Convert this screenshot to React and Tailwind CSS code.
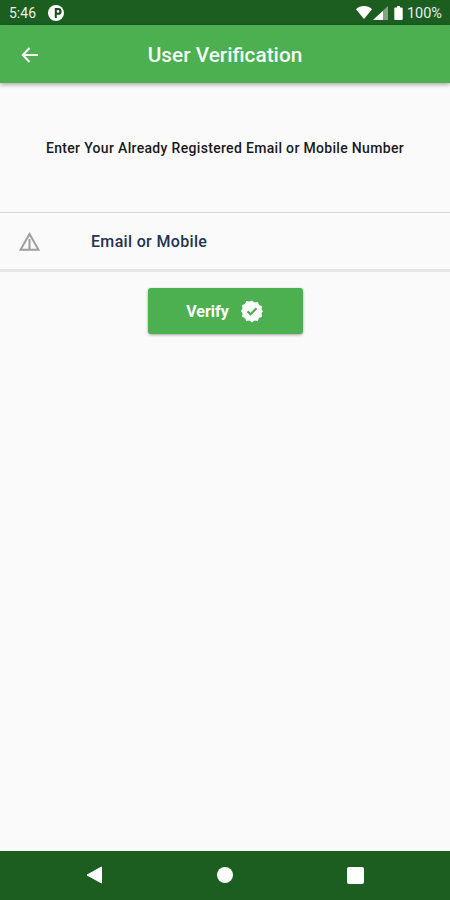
import React from "react";

const App = () => {
  return (
    <div className="h-[900px] w-[450px] flex flex-col overflow-hidden bg-[#fafafa] font-['Roboto',sans-serif]">
      {/* status bar */}
      <div className="h-[25px] shrink-0 bg-[#1b5e20] flex items-center pl-[9px] pr-[8px] text-white">
        <span className="text-[14px] leading-none opacity-90">5:46</span>
        <svg className="ml-[12px]" width="16" height="16" viewBox="0 0 16 16">
          <circle cx="8" cy="8" r="8" fill="#fff" />
          <path d="M6.800 13V3h3.400a3.300 3.300 0 0 1 0 6.800H8.800V13z" fill="#1b4d1f" />
          <circle cx="10" cy="6.400" r="1.300" fill="#fff" />
        </svg>
        <div className="ml-auto flex items-center">
          <svg width="16" height="13" viewBox="0 0 16 13">
            <path d="M0 3.200C2.200 1.200 5 0 8 0s5.800 1.200 8 3.200L8 13z" fill="#fff" />
          </svg>
          <svg className="ml-[1px]" width="15" height="14" viewBox="0 0 15 14">
            <path d="M15 0v14H0z" fill="#fff" fillOpacity="0.45" />
            <path d="M10 5v9H0z" fill="#fff" />
          </svg>
          <svg className="ml-[6px]" width="9" height="14" viewBox="0 0 9 15">
            <path d="M3 0h3v1.500h2a1 1 0 0 1 1 1V14a1 1 0 0 1-1 1H1a1 1 0 0 1-1-1V2.500a1 1 0 0 1 1-1h2z" fill="#fff" />
          </svg>
          <span className="ml-[4px] pt-[3px] text-[14.500px] leading-none opacity-90">100%</span>
        </div>
      </div>

      {/* app bar */}
      <div className="h-[58px] shrink-0 bg-[#4caf50] flex items-center justify-center pt-[3px] relative shadow-[0_2px_4px_rgba(0,0,0,0.3)]">
        <svg className="absolute left-[20px] top-[20px]" width="20" height="20" viewBox="0 0 20 20">
          <path d="M18 10H3M9.500 3 2.800 10l6.700 7" fill="none" stroke="#fff" strokeWidth="2" />
        </svg>
        <h1 className="text-[20.800px] font-medium text-white opacity-95">User Verification</h1>
      </div>

      <div className="flex-1 flex flex-col">
        <div className="h-[129px] shrink-0 flex items-center justify-center pt-[1px]">
          <p className="text-[14px] font-medium text-[#1a1a1a] tracking-[0.32px]">
            Enter Your Already Registered Email or Mobile Number
          </p>
        </div>

        {/* input */}
        <div className="h-[60px] shrink-0 flex items-center border-t border-[#d9d9d9] border-b-[3px] border-b-[#e6e6e6] pl-[19px]">
          <svg width="21" height="19" viewBox="0 0 21 19">
            <path d="M10.500 2 1.500 17.800h18z M10.500 7v10.800" fill="none" stroke="#9e9e9e" strokeWidth="2" />
          </svg>
          <span className="ml-[51px] pt-[2px] text-[16px] font-medium text-[#24344f] tracking-[0.33px]">Email or Mobile</span>
        </div>

        {/* verify */}
        <div className="flex justify-center pt-[16px]">
          <button className="w-[155px] h-[46px] rounded-[3px] bg-[#4caf50] flex items-center justify-center gap-[11px] text-white text-[16px] font-bold shadow-[0_1px_3px_rgba(0,0,0,0.35)]">
            <span className="pt-[2px]">Verify</span>
            <svg width="24" height="24" viewBox="0 0 24 24">
              <path
                fill="#fff"
                d="M12 1.500l2.600 2 3.200-.6 1.200 3 3 1.300-.5 3.200L23 12l-1.500 2.600.5 3.200-3 1.300-1.200 3-3.200-.6-2.600 2-2.600-2-3.200.6-1.200-3-3-1.300.5-3.200L1 12l1.500-2.600L2 6.200l3-1.300 1.200-3 3.200.6z"
              />
              <path d="M7.500 12.300l3 3 6-6" fill="none" stroke="#4caf50" strokeWidth="2.200" />
            </svg>
          </button>
        </div>
      </div>

      {/* nav bar */}
      <div className="h-[49px] shrink-0 bg-[#1b5e20] flex items-center justify-center pb-[1px]">
        <div className="flex items-center gap-[106px]">
          <div className="w-[24px] flex justify-center">
            <svg width="24" height="18" viewBox="0 0 24 18">
              <path d="M18.500 1v16L4 9z" fill="#fff" stroke="#fff" strokeWidth="1" strokeLinejoin="round" />
            </svg>
          </div>
          <div className="w-[24px] flex justify-center">
            <div className="w-[16px] h-[16px] rounded-full bg-white" />
          </div>
          <div className="w-[24px] flex justify-center">
            <div className="w-[17px] h-[17px] rounded-[2px] bg-white" />
          </div>
        </div>
      </div>
    </div>
  );
};

export default App;
